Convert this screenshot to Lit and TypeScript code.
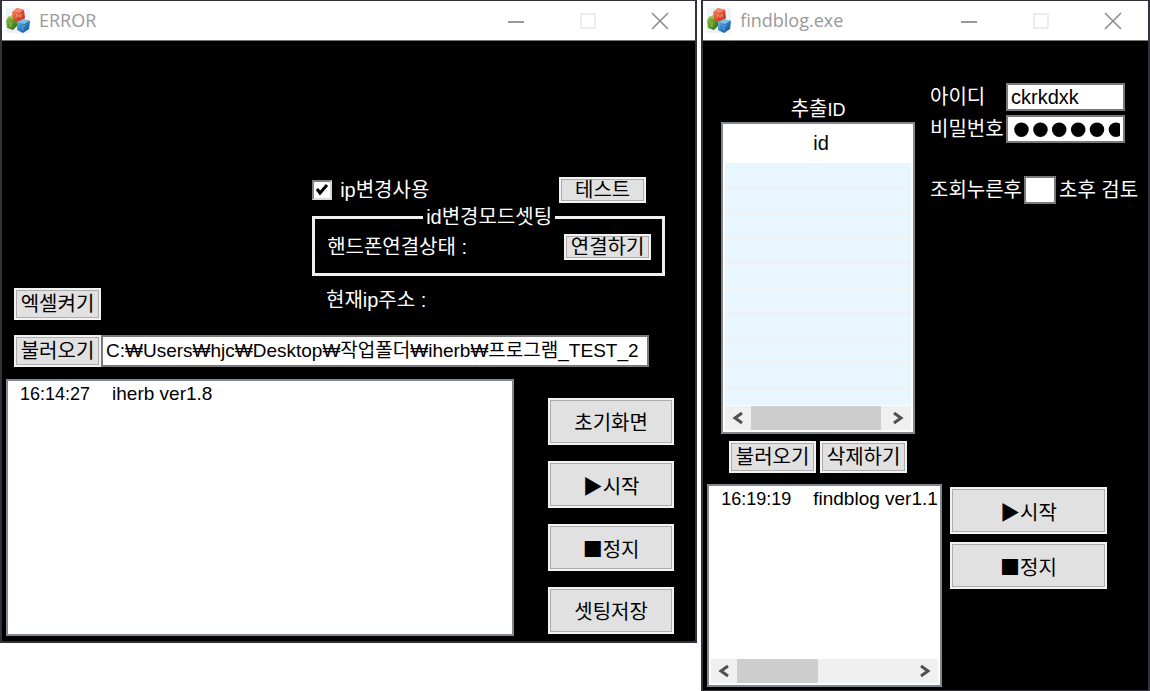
import { LitElement, html, css, svg } from "lit";
import { customElement, property } from "lit/decorators.js";

const controls = css`
  * {
    box-sizing: border-box;
  }
  .en {
    font-size: 18px;
  }
  .btn {
    height: 32px;
    width: 87px;
    flex: none;
    margin: 0;
    padding: 0;
    border: 2px solid #f2f2f2;
    box-shadow: inset 0 0 0 1px #adadad;
    background: #e1e1e1;
    color: #000;
    font: inherit;
    line-height: 24px;
    white-space: nowrap;
  }
  .btn.short {
    height: 26px;
    line-height: 20px;
  }
  .btn.large {
    height: 47px;
    width: 100%;
    padding-top: 2px;
  }
  .btn.symbol {
    font-family: "Noto Sans CJK KR", sans-serif;
  }
  .field {
    margin: 0;
    border: 2px solid #7a7a7a;
    border-radius: 0;
    background: #fff;
    color: #000;
    font: inherit;
    height: 28px;
    padding: 0 3px;
    min-width: 0;
    outline: none;
  }
`;

@customElement("app-window")
class AppWindow extends LitElement {
  @property() caption = "";

  static styles = css`
    :host {
      box-sizing: border-box;
      display: flex;
      flex-direction: column;
      min-width: 0;
      border: 2px solid #34313a;
      border-top-width: 1px;
      background: #000;
    }
    .bar {
      box-sizing: border-box;
      display: flex;
      align-items: center;
      height: 40px;
      padding: 0 25px 0 4px;
      border-bottom: 1px solid #777;
      background: #fff;
      color: #999;
      font: 18px/36px "Open Sans", sans-serif;
    }
    .caption {
      flex: 1;
      margin-left: 9px;
      padding-bottom: 2px;
    }
    .tools {
      display: flex;
      gap: 52px;
    }
    .tool {
      width: 20px;
      height: 20px;
      padding: 0;
      border: 0;
      background: none;
    }
    svg {
      display: block;
    }
  `;

  render() {
    return html`
      <header class="bar">
        <svg width="24" height="25" viewBox="0 0 24 25" aria-hidden="true">
          <defs>
            <linearGradient id="r" x2="1" y2="1"><stop stop-color="#f8906a" /><stop offset=".5" stop-color="#e4502e" /><stop offset="1" stop-color="#a82a16" /></linearGradient>
            <linearGradient id="g" x2="1" y2="1"><stop stop-color="#9cc94c" /><stop offset=".5" stop-color="#5e9a26" /><stop offset="1" stop-color="#2c5c10" /></linearGradient>
            <linearGradient id="b" x2="1" y2="1"><stop stop-color="#7cc0ea" /><stop offset=".5" stop-color="#2f7fc0" /><stop offset="1" stop-color="#0d4584" /></linearGradient>
          </defs>
          <path fill="#eef3fb" d="M0 0h24v25H0z" />
          <path fill="url(#g)" d="M0 13 2 9l5-2 5 3-1 8-4 4-6-2z" />
          <path fill="#9fcc58" d="m2 9 5-2 4 3-4 1z" />
          <path fill="url(#r)" d="m6 4 5-4 7 2 1 8-5 4-7-2z" />
          <path fill="#f58a68" d="m7 3 4-3 6 2-4 3z" />
          <path fill="url(#b)" d="m11 14 6-3 7 2-1 8-6 4-6-3z" />
          <path fill="#7fbfe8" d="m12 14 5-3 6 2-5 3z" />
          <path fill="none" stroke="#fff" stroke-opacity=".35" d="m10 10 1-4 2 3 2-3v4M5 14v5M19 18c-3-1-4 3-1 4" />
        </svg>
        <span class="caption">${this.caption}</span>
        <div class="tools">
          <button class="tool" aria-label="Minimize">${this.glyph(svg`<path stroke="#999" stroke-width="2" d="M2 11h16" />`)}</button>
          <button class="tool" aria-label="Maximize" disabled>${this.glyph(svg`<path stroke="#e6e6e6" stroke-width="1.4" d="M3 3h14v14H3z" />`)}</button>
          <button class="tool" aria-label="Close">${this.glyph(svg`<path stroke="#8c8c8c" stroke-width="1.6" d="m2 2 16 16M18 2 2 18" />`)}</button>
        </div>
      </header>
      <slot></slot>
    `;
  }

  private glyph(shape: unknown) {
    return html`<svg width="20" height="20" viewBox="0 0 20 20" fill="none" aria-hidden="true">${shape}</svg>`;
  }
}

@customElement("scroll-strip")
class ScrollStrip extends LitElement {
  @property({ type: Number }) share = 100;

  static styles = css`
    :host {
      display: flex;
      height: 24px;
      background: #f0f0f0;
    }
    .step {
      width: 26px;
      flex: none;
      display: grid;
      place-items: center;
      padding: 0;
      border: 0;
      background: none;
    }
    .track {
      flex: 1;
    }
    .thumb {
      height: 100%;
      background: #cdcdcd;
    }
  `;

  render() {
    return html`
      <button class="step" aria-label="Scroll left">
        <svg width="12" height="14" viewBox="0 0 12 14" fill="none"><path stroke="#505050" stroke-width="3" d="M10 2 3 7l7 5" /></svg>
      </button>
      <div class="track"><div class="thumb" style="width:${this.share}%"></div></div>
      <button class="step" aria-label="Scroll right">
        <svg width="12" height="14" viewBox="0 0 12 14" fill="none"><path stroke="#505050" stroke-width="3" d="m2 2 7 5-7 5" /></svg>
      </button>
    `;
  }
}

@customElement("log-box")
class LogBox extends LitElement {
  @property() time = "";
  @property() message = "";

  static styles = css`
    :host {
      display: flex;
      flex-direction: column;
      justify-content: space-between;
      min-width: 0;
      padding: 2px;
      border: 2px solid #828790;
      background: #fff;
      color: #000;
      overflow: hidden;
      font-size: 18px;
      line-height: 22px;
    }
    .entry {
      display: flex;
      gap: 22px;
      padding-left: 10px;
      overflow: hidden;
      white-space: nowrap;
    }
    .message {
      font-size: 19px;
    }
  `;

  render() {
    return html`
      <div class="entry"><span>${this.time}</span><span class="message">${this.message}</span></div>
      <slot></slot>
    `;
  }
}

@customElement("app-root")
class AppRoot extends LitElement {
  static styles = [
    controls,
    css`
      :host {
        display: flex;
        align-items: flex-start;
        gap: 4px;
        background: #fff;
        color: #fff;
        font: 20px/24px "Liberation Sans", "Noto Sans CJK KR", sans-serif;
      }
      .main {
        flex: 698;
      }
      .side {
        flex: 448;
      }
      .content {
        padding: 136px 21px 5px 4px;
      }
      .ip {
        width: 353px;
        margin: 0 9px 0 auto;
      }
      .row {
        display: flex;
        align-items: center;
      }
      .ip-row {
        justify-content: space-between;
        padding-right: 19px;
      }
      .check {
        display: flex;
        align-items: center;
        gap: 8px;
      }
      .box {
        appearance: none;
        width: 20px;
        height: 20px;
        margin: 0;
        border: 2px solid #d8d8d8;
        border-top-color: #808080;
        border-left-color: #808080;
        background: #fff;
      }
      .box:checked {
        background: #fff
          url("data:image/svg+xml,%3Csvg xmlns='http://www.w3.org/2000/svg' viewBox='0 0 16 16'%3E%3Cpath fill='none' stroke='%23000' stroke-width='3' d='m3 7 3 4 7-8'/%3E%3C/svg%3E");
      }
      .group {
        margin: 2px 0 0;
        padding: 5px 11px 13px 12px;
        border: 3px solid #f0f0f0;
        min-width: 0;
      }
      .group legend {
        margin: 0 auto;
        padding: 0 3px;
        line-height: 24px;
      }
      .group .row {
        justify-content: space-between;
      }
      .excel {
        display: flex;
        align-items: flex-start;
        margin: 12px 0 15px 8px;
      }
      .current {
        flex: 1;
        margin-left: 225px;
      }
      .path {
        display: flex;
        margin: 0 25px 12px 8px;
      }
      .path .field {
        flex: 1;
        height: 32px;
        padding-bottom: 6px;
        font-size: 19px;
      }
      .bottom {
        display: grid;
        grid-template-columns: minmax(0, 1fr) 126px;
        gap: 34px;
      }
      .stack {
        display: flex;
        flex-direction: column;
        gap: 16px;
        padding: 19px 0 2px;
      }
      .side-content {
        padding: 42px 22px 3px 4px;
      }
      .top {
        display: flex;
        align-items: flex-start;
        gap: 15px;
        margin-bottom: 11px;
      }
      .ids {
        flex: 1;
        margin: 14px 0 0 14px;
        text-align: center;
      }
      .list {
        height: 312px;
        display: flex;
        flex-direction: column;
        padding: 2px;
        border: 2px solid #828790;
        background: #fff;
        color: #000;
      }
      .rows {
        flex: 1;
        overflow: hidden;
        margin-bottom: 1px;
      }
      table {
        width: 100%;
        border-collapse: collapse;
      }
      th {
        height: 37px;
        padding: 0 0 3px 6px;
        font-weight: 400;
      }
      td {
        height: 25px;
        padding: 0;
        border-bottom: 2px solid #f0f0f0;
        background: #e8f7ff;
      }
      .pair {
        display: flex;
        justify-content: center;
        gap: 4px;
        margin-top: 7px;
      }
      .login {
        width: 210px;
        margin-right: -14px;
        white-space: nowrap;
      }
      .login .row {
        height: 28px;
        margin-bottom: 4px;
      }
      .login .name {
        width: 76px;
      }
      .login .field {
        width: 119px;
      }
      .login .secret {
        font-size: 54px;
        line-height: 24px;
        padding: 0 3px 0 4px;
      }
      .login .delay {
        margin-top: 33px;
      }
      .login .seconds {
        width: 32px;
        margin: 0 3px 0 2px;
      }
      .lower {
        display: grid;
        grid-template-columns: minmax(0, 1fr) 157px;
        gap: 8px;
        padding-right: 19px;
      }
      .lower log-box {
        height: 203px;
      }
      .lower .stack {
        gap: 8px;
        padding: 3px 0 0;
      }
    `,
  ];

  render() {
    return html`
      <app-window class="main" caption="ERROR">
        <div class="content">
          <div class="ip">
            <div class="row ip-row">
              <label class="check"><input class="box" type="checkbox" checked /><span>ip변경사용</span></label>
              <button class="btn short">테스트</button>
            </div>
            <fieldset class="group">
              <legend>id변경모드셋팅</legend>
              <div class="row"><span>핸드폰연결상태 :</span><button class="btn short">연결하기</button></div>
            </fieldset>
          </div>
          <div class="excel">
            <button class="btn">엑셀켜기</button>
            <span class="current">현재ip주소 :</span>
          </div>
          <div class="path">
            <button class="btn">불러오기</button>
            <input class="field" aria-label="불러오기" value="C:₩Users₩hjc₩Desktop₩작업폴더₩iherb₩프로그램_TEST_2" />
          </div>
          <div class="bottom">
            <log-box time="16:14:27" message="iherb ver1.8"></log-box>
            <div class="stack">
              <button class="btn large">초기화면</button>
              <button class="btn large symbol">▶시작</button>
              <button class="btn large symbol">■정지</button>
              <button class="btn large">셋팅저장</button>
            </div>
          </div>
        </div>
      </app-window>
      <app-window class="side" caption="findblog.exe">
        <div class="side-content">
          <div class="top">
            <div class="ids">
              <div>추출<span class="en">ID</span></div>
              <div class="list">
                <div class="rows">
                  <table>
                    <thead><tr><th scope="col">id</th></tr></thead>
                    <tbody>
                      ${Array.from({ length: 10 }, () => html`<tr><td></td></tr>`)}
                    </tbody>
                  </table>
                </div>
                <scroll-strip share="97"></scroll-strip>
              </div>
              <div class="pair"><button class="btn">불러오기</button><button class="btn">삭제하기</button></div>
            </div>
            <div class="login">
              <div class="row"><label class="name" for="user">아이디</label><input class="field" id="user" value="ckrkdxk" /></div>
              <div class="row"><label class="name" for="pass">비밀번호</label><input class="field secret" id="pass" type="password" value="ckrkdxk" /></div>
              <div class="row delay"><label for="delay">조회누른후</label><input class="field seconds" id="delay" /><span>초후 검토</span></div>
            </div>
          </div>
          <div class="lower">
            <log-box time="16:19:19" message="findblog ver1.1"><scroll-strip share="46"></scroll-strip></log-box>
            <div class="stack">
              <button class="btn large symbol">▶시작</button>
              <button class="btn large symbol">■정지</button>
            </div>
          </div>
        </div>
      </app-window>
    `;
  }
}
